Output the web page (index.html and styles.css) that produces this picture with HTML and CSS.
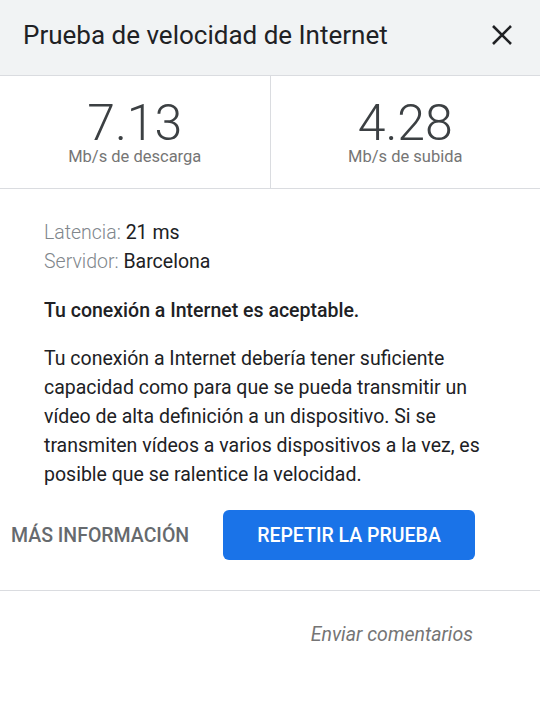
FILE: index.html
```html
<!DOCTYPE html>
<html lang="es">
<head>
    <meta charset="UTF-8">
    <title>Prueba de velocidad de Internet</title>
    <meta name="viewport" content="width=device-width, initial-scale=1.0">
    <link rel="stylesheet" href="styles.css">
</head>
<body>
    <div class="header">
        <h1>Prueba de velocidad de Internet</h1>
        <button class="close" aria-label="Cerrar">
            <svg width="20" height="20" viewBox="0 0 20 20">
                <path d="M1 1 L19 19 M19 1 L1 19" stroke="#202124" stroke-width="2.6" fill="none"/>
            </svg>
        </button>
    </div>

    <div class="stats">
        <div class="stat">
            <div class="value">7.13</div>
            <div class="unit">Mb/s de descarga</div>
        </div>
        <div class="stat">
            <div class="value">4.28</div>
            <div class="unit">Mb/s de subida</div>
        </div>
    </div>

    <div class="details">
        <div class="meta">
            <div><span class="key">Latencia:</span> 21 ms</div>
            <div><span class="key">Servidor:</span> Barcelona</div>
        </div>
        <p class="verdict">Tu conexión a Internet es aceptable.</p>
        <p class="desc">Tu conexión a Internet debería tener suficiente capacidad como para que se pueda transmitir un vídeo de alta definición a un dispositivo. Si se transmiten vídeos a varios dispositivos a la vez, es posible que se ralentice la velocidad.</p>
    </div>

    <div class="actions">
        <button class="link">MÁS INFORMACIÓN</button>
        <button class="primary">REPETIR LA PRUEBA</button>
    </div>

    <div class="footer">
        <span class="feedback">Enviar comentarios</span>
    </div>
</body>
</html>
```

FILE: styles.css
```css
* {
    box-sizing: border-box;
}

body {
    margin: 0;
    font-family: Roboto, "Noto Sans", sans-serif;
    color: #202124;
    background: #fff;
}

.header {
    display: flex;
    align-items: center;
    justify-content: space-between;
    height: 76px;
    padding: 0 28px 0 23px;
    background-color: #f1f3f4;
    border-bottom: 1px solid #dadce0;
}

.header h1 {
    margin: 0 0 6px;
    font-size: 26px;
    font-weight: 400;
}

.close {
    border: none;
    background: none;
    padding: 0;
    margin-bottom: 6px;
    display: flex;
}

.stats {
    display: flex;
    height: 113px;
    border-bottom: 1px solid #dadce0;
}

.stat {
    flex: 1;
    text-align: center;
    padding-top: 22px;
}

.stat + .stat {
    border-left: 1px solid #dadce0;
}

.value {
    font-size: 50px;
    font-weight: 300;
    line-height: 50px;
    color: #3c4043;
}

.unit {
    font-size: 16.5px;
    color: #757575;
    line-height: 18px;
}

.details {
    padding: 29px 44px 0;
    font-size: 19.5px;
}

.meta {
    line-height: 29px;
}

.key {
    color: #80868b;
    font-weight: 300;
}

.verdict {
    margin: 20px 0 0;
    font-weight: 500;
    line-height: 29px;
}

.desc {
    margin: 19px 0 0;
    line-height: 29px;
}

.actions {
    display: flex;
    align-items: flex-start;
    padding: 21px 0 0 11px;
    height: 102px;
    border-bottom: 1px solid #dadce0;
}

.actions button {
    font-family: inherit;
    font-size: 19.5px;
    font-weight: 500;
    cursor: pointer;
}

.link {
    border: none;
    background: none;
    padding: 0;
    height: 50px;
    color: #666a6e;
    width: 212px;
    text-align: left;
}

.primary {
    width: 252px;
    height: 50px;
    border: none;
    border-radius: 6px;
    background-color: #1a73e8;
    color: #fff;
}

.footer {
    display: flex;
    justify-content: flex-end;
    padding: 32px 67px 0 0;
}

.feedback {
    font-size: 19.5px;
    font-style: italic;
    color: #757575;
}
```
